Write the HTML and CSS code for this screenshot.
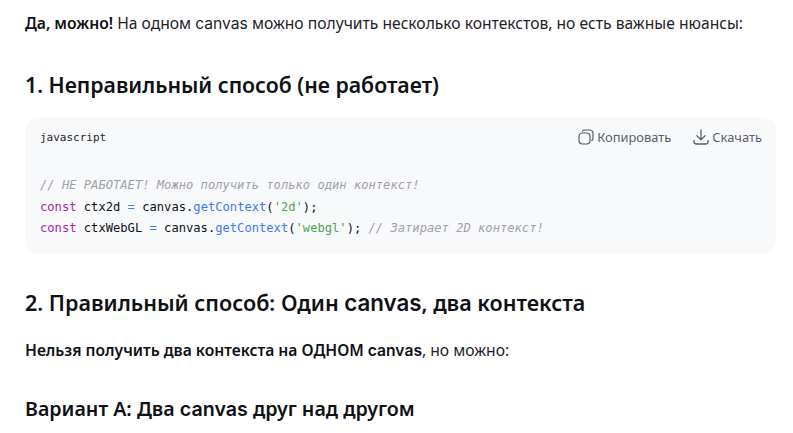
FILE: index.html
```html
<!DOCTYPE html>
<html lang="ru">
<head>
<meta charset="utf-8">
<title>Canvas</title>
<link rel="stylesheet" href="styles.css">
</head>
<body>
<main class="answer">
  <p class="para first"><strong>Да, можно!</strong> На одном <span class="lat">canvas</span> можно получить несколько контекстов, но есть важные нюансы:</p>
  <h2 class="h2 h2-one">1. Неправильный способ (не работает)</h2>
  <section class="code">
    <header class="code-head">
      <span class="lang">javascript</span>
      <div class="actions">
        <button class="act act-copy">
          <svg class="ico" viewBox="0 0 16 16" fill="none" stroke="currentColor" stroke-width="1.2" stroke-linecap="round" stroke-linejoin="round"><rect x="1" y="4" width="11" height="11" rx="3.5"/><path d="M4.5 2.2C5 1.4 5.8 1 6.8 1H11.5C13.5 1 15 2.5 15 4.5V9.2C15 10.2 14.6 11 13.8 11.5"/></svg>
          <span>Копировать</span>
        </button>
        <button class="act act-dl">
          <svg class="ico" viewBox="0 0 16 16" fill="none" stroke="currentColor" stroke-width="1.3" stroke-linecap="round" stroke-linejoin="round"><path d="M8 1V10.5M3.8 6.6L8 10.8L12.2 6.6M1 11.5V12.5C1 14 2 15 3.5 15H12.5C14 15 15 14 15 12.5V11.5"/></svg>
          <span>Скачать</span>
        </button>
      </div>
    </header>
    <pre class="pre"><code><span class="c">// НЕ РАБОТАЕТ! Можно получить только один контекст!</span>
<span class="k">const</span> ctx2d <span class="o">=</span> canvas.<span class="f">getContext</span>(<span class="s">'2d'</span>);
<span class="k">const</span> ctxWebGL <span class="o">=</span> canvas.<span class="f">getContext</span>(<span class="s">'webgl'</span>); <span class="c">// Затирает 2D контекст!</span></code></pre>
  </section>
  <h2 class="h2 h2-two">2. Правильный способ: Один <span class="lat">canvas</span>, два контекста</h2>
  <p class="para"><strong>Нельзя получить два контекста на ОДНОМ <span class="lat">canvas</span></strong>, но можно:</p>
  <h3 class="h3">Вариант A: Два <span class="lat">canvas</span> друг над другом</h3>
</main>
</body>
</html>
```
FILE: styles.css
```css
* { box-sizing: border-box; }
html, body { margin: 0; background: #fff; height: 100%; overflow: hidden; }
body { font-family: "Noto Sans", sans-serif; color: #0f1115; }
.answer { padding: 11px 17px 0 25px; }
.para { margin: 0; font-size: 15.65px; line-height: 24px; color: #1f2329; }
.para strong { font-weight: 600; color: #0f1115; }
.lat { font-family: Inter, sans-serif; }
.h2 { margin: 0; line-height: 30px; font-weight: 600; color: #0f1115; }
.h2-one { margin-top: 34px; font-size: 21.25px; }
.h2-two { margin-top: 34px; font-size: 21.55px; }
.h2-two .lat { font-size: 22.3px; }
.h2-two + .para { margin-top: 20px; }
.h3 { margin: 33px 0 0; font-size: 19.65px; line-height: 26px; font-weight: 600; }
.code { margin-top: 17px; background: #f8f9fb; border-radius: 14px; height: 137px; padding: 0 14px 0 15px; }
.code-head { display: flex; justify-content: space-between; align-items: center; height: 40px; }
.lang { font-family: "DejaVu Sans Mono", monospace; font-size: 11px; color: #1f2329; }
.actions { display: flex; gap: 22px; }
.act { display: flex; align-items: center; gap: 3px; border: 0; background: none; padding: 0; font: 12.9px "Noto Sans", sans-serif; color: #585f6b; }
.ico { width: 16px; height: 16px; }
.pre { margin: 18px 0 0; font-family: "DejaVu Sans Mono", monospace; font-size: 12.13px; line-height: 21.6px; color: #0f1115; }
.pre code { font: inherit; }
.c { color: #a0a1a7; font-style: italic; }
.k { color: #a626a4; }
.f { color: #4078f2; }
.o { color: #4078f2; }
.s { color: #50a14f; }
```
